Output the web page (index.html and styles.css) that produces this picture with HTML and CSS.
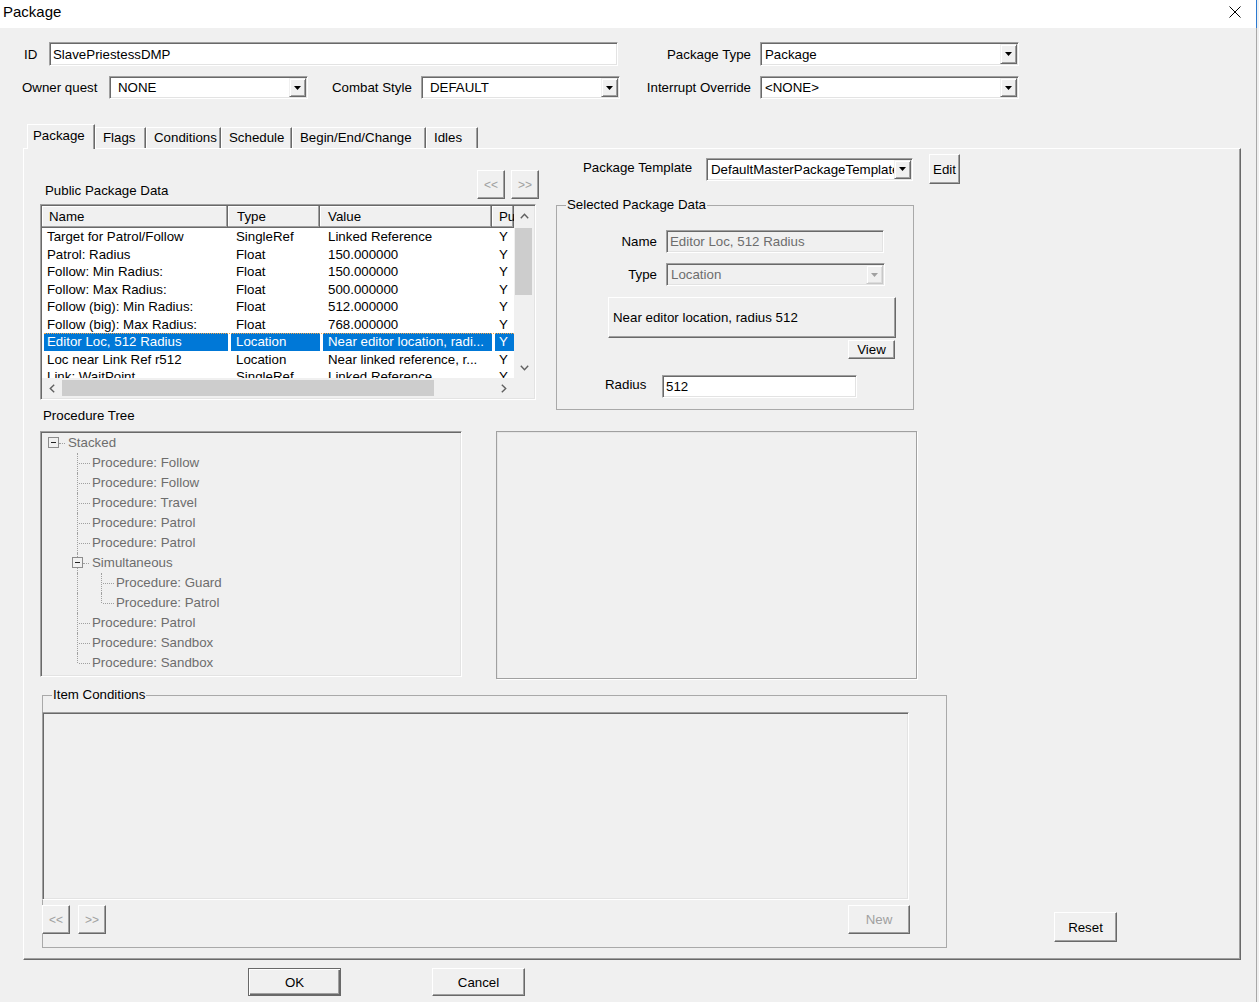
FILE: index.html
```html
<!DOCTYPE html>
<html>
<head>
<meta charset="utf-8">
<title>Package</title>
<link rel="stylesheet" href="styles.css">
</head>
<body>
<div class="window">
  <div class="titlebar">
    <span class="title">Package</span>
    <svg class="close" width="12" height="12" viewBox="0 0 12 12"><path d="M0.5 0.5 L11.5 11.5 M11.5 0.5 L0.5 11.5" stroke="#000" stroke-width="1" fill="none"/></svg>
  </div>
  <div class="dialog">
    <div class="form-row r1">
      <span class="lbl w-id">ID</span>
      <div class="edit w-idinput">SlavePriestessDMP</div>
      <span class="lbl lbl-r w-ptype">Package Type</span>
      <div class="combo w-259"><span class="val">Package</span><span class="dd"><svg width="7" height="4" viewBox="0 0 7 4"><polygon points="0,0 7,0 3.5,4" fill="#000"/></svg></span></div>
    </div>
    <div class="form-row r2">
      <span class="lbl w-owner">Owner quest</span>
      <div class="combo w-199"><span class="val wide">NONE</span><span class="dd"><svg width="7" height="4" viewBox="0 0 7 4"><polygon points="0,0 7,0 3.5,4" fill="#000"/></svg></span></div>
      <span class="lbl w-combat">Combat Style</span>
      <div class="combo w-199"><span class="val wide">DEFAULT</span><span class="dd"><svg width="7" height="4" viewBox="0 0 7 4"><polygon points="0,0 7,0 3.5,4" fill="#000"/></svg></span></div>
      <span class="lbl lbl-r w-interrupt">Interrupt Override</span>
      <div class="combo w-259"><span class="val">&lt;NONE&gt;</span><span class="dd"><svg width="7" height="4" viewBox="0 0 7 4"><polygon points="0,0 7,0 3.5,4" fill="#000"/></svg></span></div>
    </div>

    <div class="tabs">
      <div class="tab active t-package">Package</div>
      <div class="tab t-flags">Flags</div>
      <div class="tab t-cond">Conditions</div>
      <div class="tab t-sched">Schedule</div>
      <div class="tab t-begin">Begin/End/Change</div>
      <div class="tab t-idles">Idles</div>
    </div>

    <div class="tabpage">
      <div class="tp-row1">
        <div class="pub">
          <div class="pub-head">
            <span class="pub-lbl">Public Package Data</span>
            <div class="navbtns">
              <button class="btn dis nav">&lt;&lt;</button>
              <button class="btn dis nav">&gt;&gt;</button>
            </div>
          </div>
          <div class="listview">
            <div class="lv-header">
              <div class="hc c-name">Name</div>
              <div class="hc c-type">Type</div>
              <div class="hc c-value">Value</div>
              <div class="hc c-pu">Pu</div>
            </div>
            <div class="vscroll">
              <span class="sb-arrow"><svg width="9" height="6" viewBox="0 0 9 6"><polyline points="0.8,5.2 4.5,1.3 8.2,5.2" fill="none" stroke="#606060" stroke-width="1.4"/></svg></span>
              <div class="vtrack"><div class="vthumb"></div></div>
              <span class="sb-arrow"><svg width="9" height="6" viewBox="0 0 9 6"><polyline points="0.8,0.8 4.5,4.7 8.2,0.8" fill="none" stroke="#606060" stroke-width="1.4"/></svg></span>
            </div>
            <div class="lv-body">
              <div class="lv-row"><div class="c c-name">Target for Patrol/Follow</div><div class="c c-type">SingleRef</div><div class="c c-value">Linked Reference</div><div class="c c-pu">Y</div></div>
              <div class="lv-row"><div class="c c-name">Patrol: Radius</div><div class="c c-type">Float</div><div class="c c-value">150.000000</div><div class="c c-pu">Y</div></div>
              <div class="lv-row"><div class="c c-name">Follow: Min Radius:</div><div class="c c-type">Float</div><div class="c c-value">150.000000</div><div class="c c-pu">Y</div></div>
              <div class="lv-row"><div class="c c-name">Follow: Max Radius:</div><div class="c c-type">Float</div><div class="c c-value">500.000000</div><div class="c c-pu">Y</div></div>
              <div class="lv-row"><div class="c c-name">Follow (big): Min Radius:</div><div class="c c-type">Float</div><div class="c c-value">512.000000</div><div class="c c-pu">Y</div></div>
              <div class="lv-row"><div class="c c-name">Follow (big): Max Radius:</div><div class="c c-type">Float</div><div class="c c-value">768.000000</div><div class="c c-pu">Y</div></div>
              <div class="lv-row sel"><div class="c c-name">Editor Loc, 512 Radius</div><div class="c c-type">Location</div><div class="c c-value">Near editor location, radi...</div><div class="c c-pu">Y</div></div>
              <div class="lv-row"><div class="c c-name">Loc near Link Ref r512</div><div class="c c-type">Location</div><div class="c c-value">Near linked reference, r...</div><div class="c c-pu">Y</div></div>
              <div class="lv-row"><div class="c c-name">Link: WaitPoint</div><div class="c c-type">SingleRef</div><div class="c c-value">Linked Reference</div><div class="c c-pu">Y</div></div>
            </div>
            <div class="hscroll">
              <span class="sb-arrow"><svg width="6" height="9" viewBox="0 0 6 9"><polyline points="5.2,0.8 1.3,4.5 5.2,8.2" fill="none" stroke="#606060" stroke-width="1.4"/></svg></span>
              <div class="htrack"><div class="hthumb"></div></div>
              <span class="sb-arrow"><svg width="6" height="9" viewBox="0 0 6 9"><polyline points="0.8,0.8 4.7,4.5 0.8,8.2" fill="none" stroke="#606060" stroke-width="1.4"/></svg></span>
            </div>
            <div class="corner"></div>
          </div>
        </div>

        <div class="sel-col">
          <div class="tmpl-row">
            <span class="lbl tmpl-lbl">Package Template</span>
            <div class="combo w-207"><span class="val">DefaultMasterPackageTemplate</span><span class="dd"><svg width="7" height="4" viewBox="0 0 7 4"><polygon points="0,0 7,0 3.5,4" fill="#000"/></svg></span></div>
            <button class="btn edit-btn">Edit</button>
          </div>
          <fieldset class="group sel-group">
            <legend>Selected Package Data</legend>
            <div class="sg-row sg-name">
              <span class="lbl sg-lbl">Name</span>
              <div class="edit disabled w-218">Editor Loc, 512 Radius</div>
            </div>
            <div class="sg-row sg-type">
              <span class="lbl sg-lbl">Type</span>
              <div class="combo disabled w-219"><span class="val">Location</span><span class="dd"><svg width="7" height="4" viewBox="0 0 7 4"><polygon points="0,0 7,0 3.5,4" fill="#a0a0a0"/></svg></span></div>
            </div>
            <button class="btn big-btn">Near editor location, radius 512</button>
            <button class="btn view-btn">View</button>
            <div class="sg-row sg-radius">
              <span class="lbl radius-lbl">Radius</span>
              <div class="edit w-195">512</div>
            </div>
          </fieldset>
        </div>
      </div>

      <div class="tp-row2">
        <div class="lbl proc-lbl">Procedure Tree</div>
        <div class="tree-row">
          <div class="tree">
            <div class="tn"><span class="ind root"><span class="box"></span></span><span class="tt">Stacked</span></div>
            <div class="tn"><span class="ind"></span><span class="ind t"></span><span class="tt">Procedure: Follow</span></div>
            <div class="tn"><span class="ind"></span><span class="ind t"></span><span class="tt">Procedure: Follow</span></div>
            <div class="tn"><span class="ind"></span><span class="ind t"></span><span class="tt">Procedure: Travel</span></div>
            <div class="tn"><span class="ind"></span><span class="ind t"></span><span class="tt">Procedure: Patrol</span></div>
            <div class="tn"><span class="ind"></span><span class="ind t"></span><span class="tt">Procedure: Patrol</span></div>
            <div class="tn"><span class="ind"></span><span class="ind t bx"><span class="box"></span></span><span class="tt">Simultaneous</span></div>
            <div class="tn"><span class="ind"></span><span class="ind v"></span><span class="ind t"></span><span class="tt">Procedure: Guard</span></div>
            <div class="tn"><span class="ind"></span><span class="ind v"></span><span class="ind l"></span><span class="tt">Procedure: Patrol</span></div>
            <div class="tn"><span class="ind"></span><span class="ind t"></span><span class="tt">Procedure: Patrol</span></div>
            <div class="tn"><span class="ind"></span><span class="ind t"></span><span class="tt">Procedure: Sandbox</span></div>
            <div class="tn"><span class="ind"></span><span class="ind l"></span><span class="tt">Procedure: Sandbox</span></div>
          </div>
          <div class="emptybox"></div>
        </div>
      </div>

      <div class="tp-row3">
        <fieldset class="group items">
          <legend>Item Conditions</legend>
          <div class="items-list"></div>
          <div class="items-btns">
            <button class="btn dis nav">&lt;&lt;</button>
            <button class="btn dis nav">&gt;&gt;</button>
            <button class="btn dis new-btn">New</button>
          </div>
        </fieldset>
        <button class="btn reset-btn">Reset</button>
      </div>
    </div>

    <div class="footer">
      <button class="btn def foot-btn">OK</button>
      <button class="btn foot-btn">Cancel</button>
    </div>
  </div>
</div>
</body>
</html>
```

FILE: styles.css
```css
html, body {
  margin: 0;
  padding: 0;
}
body {
  background: #f0f0f0;
  font-family: "Liberation Sans", Arial, sans-serif;
  font-size: 13.3px;
  color: #000;
  overflow: hidden;
  width: 1259px;
  height: 1002px;
}
.window {
  width: 1256px;
  height: 1002px;
  border-right: 1px solid #a8a8a8;
  background: #f0f0f0;
}
.titlebar {
  height: 28px;
  background: #fff;
  display: flex;
  justify-content: space-between;
  align-items: flex-start;
  padding: 0 15px 0 3px;
  box-shadow: 1px 0 0 #2b79d0;
}
.title {
  font-size: 15px;
  line-height: 24px;
}
.close {
  margin-top: 6px;
}

/* generic controls */
.lbl {
  white-space: nowrap;
  line-height: 15px;
}
.lbl-r {
  text-align: right;
  padding-right: 9px;
  box-sizing: border-box;
}
.edit, .combo {
  box-sizing: border-box;
  background: #fff;
  border-width: 1px;
  border-style: solid;
  border-color: #a0a0a0 #fff #fff #a0a0a0;
  box-shadow: inset 1px 1px 0 #696969, inset -1px -1px 0 #e3e3e3;
  white-space: nowrap;
  overflow: hidden;
}
.edit {
  padding: 0 0 0 3px;
  display: flex;
  align-items: center;
}
.combo {
  display: flex;
  align-items: stretch;
  padding: 1px;
}
.combo .val {
  flex: 1;
  min-width: 0;
  padding-left: 3px;
  display: flex;
  align-items: center;
  overflow: hidden;
  white-space: nowrap;
}
.combo .val.wide {
  padding-left: 7px;
}
.combo .dd {
  width: 17px;
  flex: none;
  box-sizing: border-box;
  background: #f0f0f0;
  border: 1px solid;
  border-color: #f0f0f0 #696969 #696969 #f0f0f0;
  box-shadow: inset 1px 1px 0 #fff, inset -1px -1px 0 #a0a0a0;
  display: flex;
  align-items: center;
  justify-content: center;
}
.edit.disabled, .combo.disabled {
  background: #f0f0f0;
  color: #6d6d6d;
}
.combo.disabled .dd {
  border-color: #f0f0f0 #c8c8c8 #c8c8c8 #f0f0f0;
  box-shadow: inset 1px 1px 0 #fff, inset -1px -1px 0 #dcdcdc;
}
.btn {
  font: inherit;
  color: #000;
  background: #f0f0f0;
  border: 1px solid;
  border-color: #fff #696969 #696969 #fff;
  box-shadow: inset -1px -1px 0 #a0a0a0;
  padding: 0;
  margin: 0;
  box-sizing: border-box;
  white-space: nowrap;
}
.btn.dis {
  color: #a0a0a0;
}
.btn.def {
  border-color: #696969;
  box-shadow: inset 1px 1px 0 #fff, inset -1px -1px 0 #696969, inset -2px -2px 0 #a0a0a0;
}
.group {
  margin: 0;
  padding: 0;
  border: 1px solid #a9a9a9;
  min-width: 0;
  box-sizing: border-box;
}
.group legend {
  padding: 0 1px;
  margin-left: 9px;
  line-height: 14px;
  font-size: 13.3px;
}

/* top form */
.form-row {
  display: flex;
  align-items: center;
}
.r1 {
  margin-top: 14px;
  height: 24px;
  padding-left: 24px;
}
.r1 .edit, .r1 .combo { height: 24px; }
.w-id { width: 25px; }
.w-idinput { width: 569px; }
.w-ptype { width: 142px; }
.w-259 { width: 259px; }
.r2 {
  margin-top: 10px;
  height: 23px;
  padding-left: 22px;
}
.r2 .combo { height: 23px; }
.w-owner { width: 87px; }
.w-199 { width: 199px; }
.w-combat { width: 89px; margin-left: 24px; }
.w-interrupt { width: 140px; }

/* tabs */
.tabs {
  display: flex;
  align-items: flex-end;
  height: 24px;
  margin-top: 25px;
  padding-left: 27px;
}
.tab {
  height: 21px;
  box-sizing: border-box;
  border-top: 1px solid #fff;
  border-left: 1px solid #fff;
  border-right: 1px solid #696969;
  box-shadow: inset -1px 0 0 #a0a0a0;
  padding: 2px 0 0 7px;
  line-height: 16px;
  white-space: nowrap;
}
.tab.active {
  height: 25px;
  margin-bottom: -1px;
  position: relative;
  z-index: 1;
  background: #f0f0f0;
  padding: 3px 0 0 5px;
}
.t-package { width: 68px; }
.t-flags { width: 51px; }
.t-cond { width: 75px; }
.t-sched { width: 71px; }
.t-begin { width: 134px; }
.t-idles { width: 52px; }

.tabpage {
  margin-left: 23px;
  width: 1218px;
  height: 812px;
  box-sizing: border-box;
  border-top: 1px solid #fff;
  border-left: 1px solid #fff;
  border-right: 1px solid #696969;
  border-bottom: 1px solid #696969;
  box-shadow: inset -1px -1px 0 #a0a0a0;
  padding: 5px 0 0 16px;
}

/* row 1 */
.tp-row1 {
  display: flex;
  height: 256px;
}
.pub {
  width: 499px;
  margin-top: 16px;
}
.pub-head {
  display: flex;
  align-items: flex-end;
  justify-content: space-between;
  height: 29px;
}
.pub-lbl {
  margin-left: 5px;
  margin-bottom: 1px;
  line-height: 14px;
}
.navbtns {
  display: flex;
  gap: 6px;
}
.nav {
  width: 28px;
  height: 29px;
  font-size: 12px;
}

.listview {
  margin-top: 5px;
  width: 496px;
  height: 196px;
  box-sizing: border-box;
  border-width: 1px;
  border-style: solid;
  border-color: #a0a0a0 #fff #fff #a0a0a0;
  box-shadow: inset 1px 1px 0 #696969, inset -1px -1px 0 #e3e3e3;
  padding: 1px;
  display: grid;
  grid-template-columns: 472px 20px;
  grid-template-rows: 22px 150px 20px;
  background: #fff;
}
.lv-header {
  grid-column: 1;
  grid-row: 1;
  display: grid;
  grid-template-columns: 186px 92px 172px 22px;
  background: #f0f0f0;
  overflow: hidden;
}
.hc {
  box-shadow: inset -1px -1px 0 #696969, inset -2px -2px 0 #a0a0a0, inset 1px 1px 0 #fff;
  line-height: 21px;
  white-space: nowrap;
  overflow: hidden;
  padding-left: 8px;
}
.hc.c-name { padding-left: 7px; }
.hc.c-type { padding-left: 9px; }
.hc.c-pu { padding-left: 7px; }
.lv-body {
  grid-column: 1;
  grid-row: 2;
  overflow: hidden;
  background: #fff;
}
.lv-row {
  display: grid;
  grid-template-columns: 186px 92px 172px 22px;
  height: 17.5px;
  line-height: 18px;
  position: relative;
}
.lv-row .c {
  white-space: nowrap;
  overflow: hidden;
  padding-left: 8px;
}
.lv-row .c-name { padding-left: 5px; }
.lv-row .c-pu { padding-left: 7px; }
.lv-row.sel .c {
  background: #0078d7;
  color: #fff;
  box-shadow: inset 2px 0 0 #fff;
}
.lv-row.sel .c-type, .lv-row.sel .c-value, .lv-row.sel .c-pu {
  box-shadow: inset 3px 0 0 #fff;
}
.lv-row.sel::before {
  content: "";
  position: absolute;
  left: 2px;
  right: 0;
  top: 0;
  border-top: 1px dotted #f5a54a;
}
.vscroll {
  grid-column: 2;
  grid-row: 1 / 3;
  background: #f0f0f0;
  display: flex;
  flex-direction: column;
}
.sb-arrow {
  width: 20px;
  height: 20px;
  flex: none;
  display: flex;
  align-items: center;
  justify-content: center;
}
.vtrack {
  flex: 1;
  padding: 2px 2px 0 1px;
}
.vthumb {
  height: 67px;
  background: #cdcdcd;
}
.hscroll {
  grid-column: 1;
  grid-row: 3;
  background: #f0f0f0;
  display: flex;
}
.htrack {
  flex: 1;
  padding: 2px 0 2px 0;
}
.hthumb {
  width: 372px;
  height: 100%;
  background: #cdcdcd;
}
.corner {
  grid-column: 2;
  grid-row: 3;
  background: #f0f0f0;
}

.sel-col {
  margin-left: 17px;
  width: 405px;
}
.tmpl-row {
  display: flex;
  align-items: center;
  height: 30px;
}
.tmpl-lbl {
  margin-left: 27px;
  width: 123px;
  margin-top: -3px;
}
.w-207 {
  width: 207px;
  height: 23px;
}
.edit-btn {
  width: 31px;
  height: 30px;
  margin-left: 16px;
  align-self: flex-start;
}
.sel-group {
  margin-top: 14px;
  width: 358px;
  height: 212px;
}
.sg-row {
  display: flex;
  align-items: center;
}
.sg-name { margin-top: 18px; }
.sg-type { margin-top: 10px; }
.sg-lbl {
  width: 100px;
  text-align: right;
  margin-right: 9px;
}
.w-218 { width: 218px; height: 23px; }
.w-219 { width: 219px; height: 23px; }
.big-btn {
  display: block;
  margin: 11px 0 0 51px;
  width: 288px;
  height: 41px;
  text-align: left;
  padding-left: 4px;
}
.view-btn {
  display: block;
  margin: 2px 0 0 291px;
  width: 47px;
  height: 19px;
}
.sg-radius {
  margin-top: 16px;
}
.radius-lbl {
  margin-left: 48px;
  width: 42px;
  margin-right: 15px;
  margin-top: -4px;
}
.w-195 { width: 195px; height: 23px; }

/* row 2 */
.tp-row2 {
  margin-top: -1px;
}
.proc-lbl {
  margin-left: 3px;
  line-height: 14px;
}
.tree-row {
  display: flex;
  align-items: flex-start;
  margin-top: 8px;
}
.tree {
  width: 422px;
  height: 246px;
  box-sizing: border-box;
  border-width: 1px;
  border-style: solid;
  border-color: #a0a0a0 #fff #fff #a0a0a0;
  box-shadow: inset 1px 1px 0 #696969, inset -1px -1px 0 #e3e3e3;
  padding: 1px;
  background: #f0f0f0;
}
.tn {
  display: flex;
  align-items: center;
  height: 20px;
}
.ind {
  width: 24px;
  height: 20px;
  flex: none;
  position: relative;
}
.ind.t::before, .ind.v::before, .ind.l::before {
  content: "";
  position: absolute;
  left: 11px;
  top: 0;
  bottom: 0;
  border-left: 1px dotted #a0a0a0;
}
.ind.l::before {
  bottom: 10px;
}
.ind.t::after, .ind.l::after, .ind.root::after {
  content: "";
  position: absolute;
  left: 13px;
  width: 11px;
  top: 10px;
  border-top: 1px dotted #a0a0a0;
}
.ind.root::after {
  left: 17px;
  width: 6px;
}
.ind.bx::after {
  left: 17px;
  width: 6px;
}
.box {
  position: absolute;
  left: 6px;
  top: 4px;
  width: 9px;
  height: 9px;
  border: 1px solid #8c8c8c;
  background: #f0f0f0;
  z-index: 1;
}
.box::after {
  content: "";
  position: absolute;
  left: 2px;
  top: 4px;
  width: 5px;
  height: 1px;
  background: #222;
}
.tt {
  margin-left: 2px;
  color: #6d6d6d;
  white-space: nowrap;
  line-height: 16px;
}
.emptybox {
  margin-left: 34px;
  width: 421px;
  height: 248px;
  box-sizing: border-box;
  border: 1px solid #a0a0a0;
  box-shadow: inset 1px 1px 0 #e6e6e6, 1px 1px 0 #fff;
}

/* row 3 */
.tp-row3 {
  margin-top: 9px;
  display: flex;
  align-items: flex-end;
}
.items {
  margin-left: 2px;
  width: 905px;
  height: 260px;
}
.items-list {
  margin: 10px 0 0 -1px;
  width: 867px;
  height: 188px;
  box-sizing: border-box;
  border-width: 1px;
  border-style: solid;
  border-color: #a0a0a0 #fff #fff #a0a0a0;
  box-shadow: inset 1px 1px 0 #696969, inset -1px -1px 0 #e3e3e3;
}
.items-btns {
  display: flex;
  margin: 5px 0 0 -1px;
  width: 868px;
  gap: 8px;
}
.new-btn {
  margin-left: auto;
  width: 62px;
  height: 29px;
}
.reset-btn {
  margin-left: 107px;
  margin-bottom: 6px;
  width: 63px;
  height: 30px;
}

/* footer */
.footer {
  display: flex;
  gap: 91px;
  padding-left: 248px;
  margin-top: 8px;
}
.foot-btn {
  width: 93px;
  height: 28px;
}
```
